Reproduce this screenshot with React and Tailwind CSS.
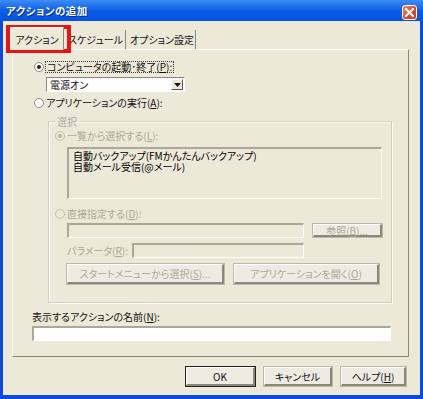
const font = { fontFamily: '"Noto Sans CJK JP", "Noto Sans", sans-serif' };

const Radio = ({ checked, disabled }) => (
  <div
    className={`w-[10px] h-[10px] rounded-full border flex items-center justify-center shrink-0 ${
      disabled ? "border-[#c4c1b0] bg-[#ece9d8]" : "border-[#8d8a7c] bg-white"
    }`}
  >
    {checked && (
      <div className={`w-[4px] h-[4px] rounded-full ${disabled ? "bg-[#b8b5a4]" : "bg-[#222]"}`} />
    )}
  </div>
);

const Btn = ({ children, w, disabled, def }) => (
  <div
    className={`h-full ${w} flex items-center justify-center border ${
      def ? "border-[#222]" : "border-[#bcb9a8]"
    } bg-[#eeece2]`}
  >
    <div
      className={`w-full h-full flex items-center justify-center border-t border-l border-t-white border-l-white border-r-2 border-b-2 border-r-[#8a887c] border-b-[#8a887c] ${
        disabled ? "text-[#aca899]" : "text-[#111]"
      }`}
    >
      {children}
    </div>
  </div>
);

const Sunken = ({ cls, bg = "bg-[#ece9d8]" }) => (
  <div className={`${cls} ${bg} border-t-2 border-l-2 border-t-[#aca899] border-l-[#aca899] border-b border-r border-b-white border-r-white`} />
);

export default function App() {
  return (
    <div
      className="relative w-[423px] h-[399px] flex flex-col bg-[#0a4bdc] text-[10px] leading-[11px] whitespace-nowrap [font-feature-settings:'palt'_1]"
      style={font}
    >
      {/* title bar */}
      <div className="h-[21px] shrink-0 flex items-center justify-between pl-[6px] pr-[6px] bg-gradient-to-b from-[#3d8cf5] via-[#0a5eea] to-[#0553e0]">
        <span className="text-white font-bold text-[10.5px] tracking-[0.5px] [text-shadow:1px_1px_0_#0a2a8a]">アクションの追加</span>
        <div className="w-[15px] h-[15px] mt-[3px] rounded-[3px] border border-white bg-gradient-to-br from-[#f08a6a] via-[#e0512c] to-[#c73b1b] flex items-center justify-center">
          <svg width="9" height="9" viewBox="0 0 9 9">
            <path d="M1 1 L8 8 M8 1 L1 8" stroke="white" strokeWidth="2" strokeLinecap="square" />
          </svg>
        </div>
      </div>

      {/* body */}
      <div className="flex-1 flex flex-col mx-[3px] mb-[4px] bg-[#ece9d8] text-[#111]">
        {/* tabs */}
        <div className="h-[28px] shrink-0 flex items-end pl-[7px]">
          <div className="relative z-10 -mb-px w-[54px] h-[23px] bg-[#ece9d8] border-t border-l border-white border-r border-r-[#8a887c] flex items-center justify-center">
            アクション
          </div>
          <div className="w-[62px] h-[19px] border-r border-r-[#8a887c] flex items-center pl-[4px]">スケジュール</div>
          <div className="w-[70px] h-[19px] border-r border-r-[#8a887c] flex items-center pl-[4px]">オプション設定</div>
        </div>

        {/* panel */}
        <div className="ml-[9px] mr-[11px] h-[308px] shrink-0 flex flex-col border-t border-l border-white border-r border-b border-r-[#8a887c] border-b-[#8a887c]">
          <div className="flex items-center mt-[11px] ml-[21px] h-[11px]">
            <Radio checked />
            <span className="ml-[1px] px-[1px] border border-dotted border-[#333] leading-[10px]">
              コンピュータの起動･終了(<u>P</u>):
            </span>
          </div>

          <div className="ml-[33px] mt-[5px] w-[139px] h-[15px] flex items-center bg-white border-t border-l border-[#8a887c] border-b border-r border-b-white border-r-white">
            <span className="flex-1 pl-[3px]">電源オン</span>
            <div className="w-[12px] h-[11px] mr-[1px] bg-[#ece9d8] border-t border-l border-white border-r border-b border-r-[#555] border-b-[#555] flex items-center justify-center">
              <svg width="7" height="4" viewBox="0 0 7 4"><path d="M0 0 H7 L3.5 4 Z" fill="#111" /></svg>
            </div>
          </div>

          <div className="flex items-center mt-[5px] ml-[21px] h-[11px]">
            <Radio />
            <span className="ml-[2px]">アプリケーションの実行(<u>A</u>):</span>
          </div>

          {/* group box */}
          <fieldset className="ml-[35px] mt-[8px] w-[344px] h-[187px] border border-[#d0d0bf] shadow-[inset_1px_1px_0_white,1px_1px_0_white]">
            <legend className="ml-[6px] px-[2px] text-[#aca899] leading-[11px]">選択</legend>
            <div className="flex items-center mt-[3px] ml-[6px] h-[11px] text-[#aca899]">
              <Radio checked disabled />
              <span className="ml-[2px]">一覧から選択する(<u>L</u>):</span>
            </div>
            <div className="ml-[18px] mt-[6px] w-[315px] h-[52px] pt-[1px] pl-[4px] leading-[11px] text-[#000] border-t-2 border-l-2 border-t-[#aca899] border-l-[#aca899] border-b border-r border-b-white border-r-white">
              <div>自動バックアップ(FMかんたんバックアップ)</div>
              <div>自動メール受信(@メール)</div>
            </div>
            <div className="flex items-center mt-[9px] ml-[6px] h-[11px] text-[#aca899]">
              <Radio disabled />
              <span className="ml-[2px]">直接指定する(<u>D</u>):</span>
            </div>
            <div className="flex ml-[18px] mt-[4px] h-[15px] gap-[8px]">
              <Sunken cls="w-[237px] h-full" />
              <Btn w="w-[71px]" disabled>参照(<u>B</u>)...</Btn>
            </div>
            <div className="flex items-center ml-[18px] mt-[5px] h-[15px] text-[#aca899]">
              <span className="w-[65px]">パラメータ(<u>R</u>):</span>
              <Sunken cls="w-[172px] h-full" />
            </div>
            <div className="flex ml-[17px] mt-[5px] h-[22px] gap-[8px]">
              <Btn w="w-[159px]" disabled>スタートメニューから選択(<u>S</u>)...</Btn>
              <Btn w="w-[147px]" disabled>アプリケーションを開く(<u>O</u>)</Btn>
            </div>
          </fieldset>

          <div className="ml-[19px] mt-[8px] h-[11px]">表示するアクションの名前(<u>N</u>):</div>
          <Sunken cls="ml-[19px] mt-[4px] w-[359px] h-[15px]" bg="bg-white" />
        </div>

        {/* dialog buttons */}
        <div className="flex justify-end gap-[7px] mr-[13px] mt-[9px] h-[21px]">
          <Btn w="w-[71px]" def>OK</Btn>
          <Btn w="w-[70px]">キャンセル</Btn>
          <Btn w="w-[67px]">ヘルプ(<u>H</u>)</Btn>
        </div>
      </div>

      {/* red highlight */}
      <div className="absolute left-[6px] top-[25px] w-[65px] h-[28px] border-[4px] border-[#ee1111] pointer-events-none" />
    </div>
  );
}
